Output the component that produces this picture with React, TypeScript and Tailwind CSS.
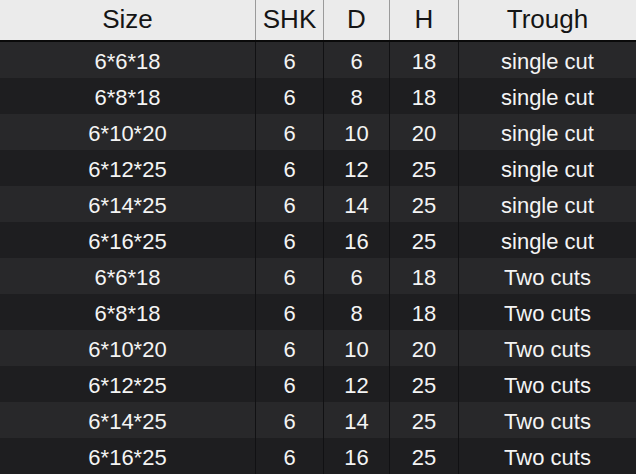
import React from 'react';

type Row = { size: string; shk: string; d: string; h: string; trough: string };

const rows: Row[] = [
  { size: '6*6*18', shk: '6', d: '6', h: '18', trough: 'single cut' },
  { size: '6*8*18', shk: '6', d: '8', h: '18', trough: 'single cut' },
  { size: '6*10*20', shk: '6', d: '10', h: '20', trough: 'single cut' },
  { size: '6*12*25', shk: '6', d: '12', h: '25', trough: 'single cut' },
  { size: '6*14*25', shk: '6', d: '14', h: '25', trough: 'single cut' },
  { size: '6*16*25', shk: '6', d: '16', h: '25', trough: 'single cut' },
  { size: '6*6*18', shk: '6', d: '6', h: '18', trough: 'Two cuts' },
  { size: '6*8*18', shk: '6', d: '8', h: '18', trough: 'Two cuts' },
  { size: '6*10*20', shk: '6', d: '10', h: '20', trough: 'Two cuts' },
  { size: '6*12*25', shk: '6', d: '12', h: '25', trough: 'Two cuts' },
  { size: '6*14*25', shk: '6', d: '14', h: '25', trough: 'Two cuts' },
  { size: '6*16*25', shk: '6', d: '16', h: '25', trough: 'Two cuts' },
];

const cols = 'grid grid-cols-[256px_68px_66px_69px_1fr]';

export default function App() {
  return (
    <div
      className="w-[636px] h-[474px] overflow-hidden bg-[#1e1e20]"
      style={{ fontFamily: '"Liberation Sans", Arial, sans-serif' }}
    >
      {/* Header */}
      <div className={`${cols} h-[42px] bg-[#ebebeb] border-b-2 border-[#0a0a0a] text-[26px] text-[#151515]`}>
        {['Size', 'SHK', 'D', 'H', 'Trough'].map((label, i) => (
          <div
            key={label}
            className={`flex items-center justify-center pb-[1px] ${i < 4 ? 'border-r border-[#9a9a9a]' : ''}`}
          >
            {label}
          </div>
        ))}
      </div>

      {/* Body */}
      {rows.map((r, idx) => (
        <div
          key={idx}
          className={`${cols} h-[36px] text-[22px] text-[#f4f4f4] ${idx % 2 === 0 ? 'bg-[#28282a]' : 'bg-[#1e1e20]'}`}
        >
          {[r.size, r.shk, r.d, r.h, r.trough].map((v, i) => (
            <div
              key={i}
              className={`flex items-center justify-center pt-[2px] ${i < 4 ? 'border-r border-[#111113]' : ''}`}
            >
              {v}
            </div>
          ))}
        </div>
      ))}
    </div>
  );
}
